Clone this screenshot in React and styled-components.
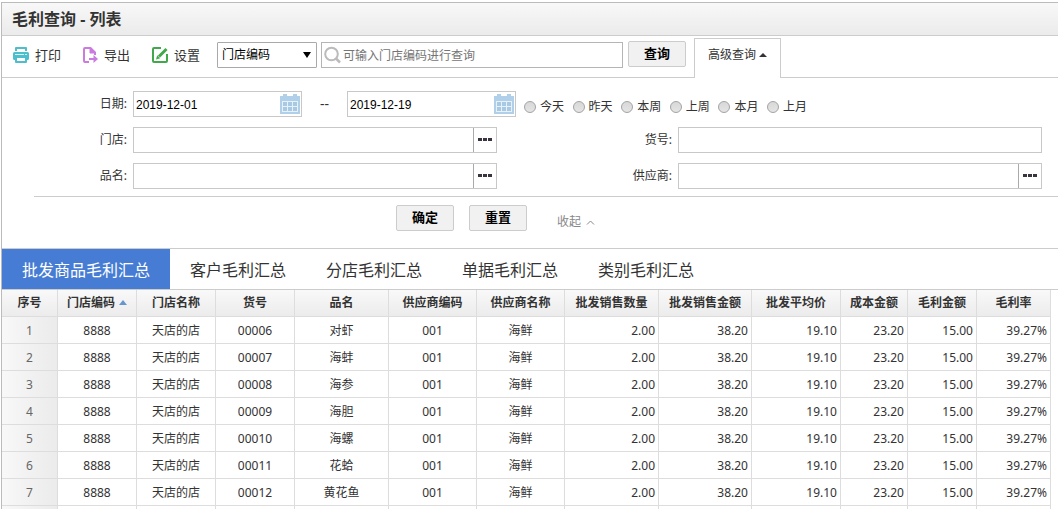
import React, { useState } from 'react';
import styled, { createGlobalStyle, css } from 'styled-components';

const GlobalStyle = createGlobalStyle`
    * {
        box-sizing: border-box;
    }
    body {
        margin: 0;
        background: #fff;
        color: #333;
        font: 12px/18px "Noto Sans", "Noto Sans CJK SC", sans-serif;
    }
    button, input, select {
        font: inherit;
        color: #000;
        margin: 0;
    }
`;

const Page = styled.main`
    margin: 2px 0 0 1px;
    border: solid #bbb;
    border-width: 1px 0 0 1px;
`;

const TitleBar = styled.header`
    height: 33px;
    border-bottom: 1px solid #ccc;
    background: linear-gradient(#f8f8f8, #ebebeb);
`;

const Title = styled.h1`
    margin: 0;
    padding-left: 10px;
    font-size: 16px;
    line-height: 32px;
`;

const Toolbar = styled.div`
    display: flex;
    align-items: flex-start;
    height: 42px;
    padding: 5px 0 0 11px;
    border-bottom: 1px solid #ccc;
`;

const ToolButton = styled.button`
    display: flex;
    align-items: center;
    gap: 6px;
    height: 28px;
    padding: 0;
    border: 0;
    background: none;
    color: #333;
    font-size: 13px;
    cursor: pointer;
    svg {
        flex: none;
    }
`;

const Tools = styled.div`
    display: flex;
    gap: 21px;
    margin-right: 17px;
`;

const SelectBox = styled.div`
    display: flex;
    position: relative;
    width: 100px;
    height: 26px;
    margin: 1px 4px 0 0;
    svg {
        position: absolute;
        right: 6px;
        top: 10px;
        pointer-events: none;
    }
`;

const Select = styled.select`
    appearance: none;
    width: 100%;
    padding: 0 20px 0 4px;
    border: 1px solid #a9a9a9;
    border-radius: 1px;
    background: #fff;
`;

const Box = styled.div`
    display: flex;
    align-items: center;
    width: ${props => props.$width || 'auto'};
    flex: ${props => (props.$width ? 'none' : '1')};
    height: 26px;
    border: 1px solid ${props => props.$border || '#c8c8c8'};
    background: #fff;
`;

const SearchBox = styled(Box)`
    margin: 1px 5px 0 0;
    padding-left: 2px;
    gap: 2px;
    svg {
        flex: none;
    }
`;

const TextInput = styled.input`
    flex: 1;
    min-width: 0;
    height: 100%;
    padding: 0;
    border: 0;
    outline: 0;
    background: none;
    &::placeholder {
        color: #757575;
    }
`;

const DateInput = styled(TextInput)`
    padding: 2px 0 0 2px;
    font-family: "Liberation Sans", Arial, sans-serif;
`;

const Button = styled.button`
    width: 58px;
    height: 26px;
    padding: 0 0 2px;
    border: 1px solid #ccc;
    border-radius: 2px;
    background: #f1f1f1;
    font-size: 13px;
    font-weight: 700;
    cursor: pointer;
`;

const AdvancedTab = styled.button`
    display: flex;
    justify-content: center;
    align-items: center;
    gap: 3px;
    width: 87px;
    height: 40px;
    margin: -3px 0 0 8px;
    padding: 0 0 8px;
    border: 1px solid #ccc;
    border-bottom: 0;
    background: #fff;
    color: #333;
    cursor: pointer;
`;

const Panel = styled.form`
    height: 171px;
    padding-top: 13px;
    border-bottom: 1px solid #ccc;
`;

const Fields = styled.div`
    display: grid;
    grid-template-columns: 1fr 1fr;
    gap: 10px 50px;
    padding-right: 16px;
`;

const Field = styled.div`
    display: flex;
    align-items: center;
    ${props => props.$wide && css`
        grid-column: 1 / -1;
    `}
`;

const FieldLabel = styled.label`
    width: 131px;
    padding-right: 6px;
    text-align: right;
`;

const Dash = styled.span`
    width: 45px;
    text-align: center;
    font-size: 14px;
`;

const IconButton = styled.button`
    display: flex;
    justify-content: center;
    align-items: center;
    height: 24px;
    width: ${props => (props.$divided ? '23px' : '22px')};
    padding: 0;
    border: 0;
    border-left: ${props => (props.$divided ? '1px solid #aaa' : '0')};
    background: none;
    cursor: pointer;
`;

const Periods = styled.div`
    display: flex;
    justify-content: space-between;
    align-self: flex-end;
    width: 283px;
    height: 20px;
    margin-left: 8px;
`;

const Period = styled.label`
    display: flex;
    align-items: center;
    gap: 4px;
`;

const Radio = styled.input`
    appearance: none;
    width: 12px;
    height: 12px;
    border: 1px solid #a3a3a3;
    border-radius: 50%;
    background: linear-gradient(#d8d8d8, #e4e4e4);
    &:checked {
        background: radial-gradient(#444 35%, #ddd 40%);
    }
`;

const Actions = styled.div`
    display: flex;
    gap: 15px;
    margin: 7px 0 0 32px;
    padding: 8px 0 0 362px;
    border-top: 1px solid #ccc;
`;

const Collapse = styled.button`
    display: flex;
    align-items: center;
    gap: 5px;
    height: 18px;
    margin: 8px 0 0 15px;
    padding: 0;
    border: 0;
    background: none;
    color: #888;
    cursor: pointer;
`;

const Tabs = styled.nav`
    display: flex;
    height: 41px;
    border-bottom: 1px solid #ccc;
`;

const Tab = styled.a`
    padding: 0 20px;
    font-size: 16px;
    line-height: 42px;
    height: 40px;
    text-decoration: none;
    color: ${props => (props.$active ? '#fff' : '#333')};
    background: ${props => (props.$active ? '#467cd4' : 'none')};
`;

const TableWrapper = styled.div`
    padding-right: 7px;
`;

const Table = styled.table`
    width: 100%;
    table-layout: fixed;
    border-spacing: 0;
`;

const Th = styled.th`
    height: 27px;
    padding: 0;
    border: solid #ddd;
    border-width: 0 1px 1px 0;
    background: linear-gradient(#f9f9f9, #ececec);
    white-space: nowrap;
    svg {
        margin: 0 0 2px 4px;
    }
`;

const Td = styled.td`
    height: 27px;
    padding: 2px 3px 0;
    border: solid #ddd;
    border-width: 0 1px 1px 0;
    text-align: ${props => (props.$number ? 'right' : 'center')};
    ${props => props.$index && css`
        color: #666;
        background: linear-gradient(90deg, #f8f8f8, #ebebeb);
    `}
`;

const Filler = styled(Td)`
    height: 3px;
    border-bottom: 0;
`;

const PrintIcon = () => (
    <svg width="16" height="16" viewBox="0 0 16 16">
        <path d="M3 0h10a1 1 0 0 1 1 1v3H2V1a1 1 0 0 1 1-1z" fill="#4dbfcc" />
        <path d="M4 2h8v2H4z" fill="#fff" />
        <path d="M1.500 5h13A1.500 1.500 0 0 1 16 6.500v5a1.500 1.500 0 0 1-1.500 1.500h-13A1.500 1.500 0 0 1 0 11.500v-5A1.500 1.500 0 0 1 1.500 5z" fill="#4dbfcc" />
        <path d="M2 7h9v1H2zM12 7h2v1h-2z" fill="#d5f1f4" />
        <path d="M2 10h12v5a1 1 0 0 1-1 1H3a1 1 0 0 1-1-1z" fill="#4dbfcc" />
        <path d="M4 11h8v3H4z" fill="#fff" />
    </svg>
);

const ExportIcon = () => (
    <svg width="16" height="16" viewBox="0 0 16 16" fill="none" stroke="#cb7be0" strokeWidth="2">
        <path d="M7 15H3a1 1 0 0 1-1-1V2a1 1 0 0 1 1-1h5.500L13 5.500V8" />
        <path d="M8 1v5h5z" fill="#cb7be0" strokeWidth="1" />
        <path d="M7 12h6" />
        <path d="M11.500 8v8l4.500-4z" fill="#cb7be0" stroke="none" />
    </svg>
);

const SettingsIcon = () => (
    <svg width="17" height="16" viewBox="0 0 17 16" fill="none" stroke="#41a94b" strokeWidth="2">
        <path d="M10 1H3a1 1 0 0 0-1 1v12a1 1 0 0 0 1 1h12a1 1 0 0 0 1-1V7" />
        <path d="M8 9.500L15.500 2" strokeWidth="3" />
        <path d="M5 12.500l1.200-4.200 3 3z" fill="#41a94b" stroke="none" />
    </svg>
);

const SearchIcon = () => (
    <svg width="17" height="18" viewBox="0 0 17 18" fill="none" stroke="#bbb" strokeWidth="2">
        <circle cx="7.500" cy="8" r="6.300" />
        <path d="M12 12.500l4 4" strokeWidth="2.500" />
    </svg>
);

const CalendarIcon = () => (
    <svg width="20" height="20" viewBox="0 0 20 20">
        <path d="M0 2h20v18H0z" fill="#b0d0e9" />
        <path d="M3 0h4v3H3zM13 0h4v3h-4z" fill="#b0d0e9" />
        <path d="M2 7h16v11H2z" fill="#e6f1f9" />
        <path d="M3 8h4v4H3zM8 8h4v4H8zM13 8h4v4h-4zM3 13h4v4H3zM8 13h4v4H8zM13 13h4v4h-4z" fill="#a8c9e3" />
    </svg>
);

const DotsIcon = () => (
    <svg width="14" height="4" viewBox="0 0 14 4" fill="#3a3340">
        <path d="M0 0h4v3H0zM5 0h4v3H5zM10 0h4v3h-4z" />
    </svg>
);

const Triangle = ({ color, width = 8, height = 4, down }) => (
    <svg width={width} height={height} viewBox="0 0 8 4" preserveAspectRatio="none">
        <path d={down ? 'M0 0h8L4 4z' : 'M0 4h8L4 0z'} fill={color} />
    </svg>
);

const columns = [
    { title: '序号', width: 56 },
    { title: '门店编码', width: 79, sorted: true },
    { title: '门店名称', width: 79 },
    { title: '货号', width: 79 },
    { title: '品名', width: 94 },
    { title: '供应商编码', width: 88 },
    { title: '供应商名称', width: 88 },
    { title: '批发销售数量', width: 94, number: true },
    { title: '批发销售金额', width: 93, number: true },
    { title: '批发平均价', width: 89, number: true },
    { title: '成本金额', width: 67, number: true },
    { title: '毛利金额', width: 69, number: true },
    { title: '毛利率', width: 74, number: true },
];

const Col = styled.col`
    width: ${props => props.$width}px;
`;

const products = ['对虾', '海蚌', '海参', '海胆', '海螺', '花蛤', '黄花鱼'];

const rows = products.map((name, i) => [
    i + 1, '8888', '天店的店', String(i + 6).padStart(5, '0'), name, '001', '海鲜',
    '2.00', '38.20', '19.10', '23.20', '15.00', '39.27%',
]);

const periods = ['今天', '昨天', '本周', '上周', '本月', '上月'];
const tabs = ['批发商品毛利汇总', '客户毛利汇总', '分店毛利汇总', '单据毛利汇总', '类别毛利汇总'];

const LookupField = ({ id, label, lookup }) => (
    <Field>
        <FieldLabel htmlFor={id}>{label}:</FieldLabel>
        <Box>
            <TextInput id={id} />
            {lookup && (
                <IconButton type="button" $divided aria-label={`选择${label}`}>
                    <DotsIcon />
                </IconButton>
            )}
        </Box>
    </Field>
);

const DateBox = ({ id, label, value }) => (
    <Box $width="169px">
        <DateInput id={id} aria-label={label} defaultValue={value} />
        <IconButton type="button" aria-label="选择日期">
            <CalendarIcon />
        </IconButton>
    </Box>
);

const App = () => {
    const [open, setOpen] = useState(true);
    const [active, setActive] = useState(0);

    return (
        <>
            <GlobalStyle />
            <Page>
                <TitleBar>
                    <Title>毛利查询 - 列表</Title>
                </TitleBar>
                <Toolbar>
                    <Tools>
                        <ToolButton><PrintIcon />打印</ToolButton>
                        <ToolButton><ExportIcon />导出</ToolButton>
                        <ToolButton><SettingsIcon />设置</ToolButton>
                    </Tools>
                    <SelectBox>
                        <Select aria-label="查询字段">
                            <option>门店编码</option>
                        </Select>
                        <Triangle color="#000" height={6} down />
                    </SelectBox>
                    <SearchBox $width="302px" $border="#b5b5b5">
                        <SearchIcon />
                        <TextInput aria-label="门店编码" placeholder="可输入门店编码进行查询" />
                    </SearchBox>
                    <Button>查询</Button>
                    <AdvancedTab onClick={() => setOpen(!open)}>
                        高级查询
                        <Triangle color="#333" />
                    </AdvancedTab>
                </Toolbar>
                {open && (
                    <Panel onSubmit={e => e.preventDefault()}>
                        <Fields>
                            <Field $wide>
                                <FieldLabel htmlFor="from">日期:</FieldLabel>
                                <DateBox id="from" value="2019-12-01" />
                                <Dash>--</Dash>
                                <DateBox id="to" label="结束日期" value="2019-12-19" />
                                <Periods>
                                    {periods.map(period => (
                                        <Period key={period}>
                                            <Radio type="radio" name="period" />
                                            {period}
                                        </Period>
                                    ))}
                                </Periods>
                            </Field>
                            <LookupField id="store" label="门店" lookup />
                            <LookupField id="code" label="货号" />
                            <LookupField id="name" label="品名" lookup />
                            <LookupField id="supplier" label="供应商" lookup />
                        </Fields>
                        <Actions>
                            <Button type="submit">确定</Button>
                            <Button type="reset">重置</Button>
                            <Collapse type="button" onClick={() => setOpen(false)}>
                                收起
                                <svg width="9" height="5" viewBox="0 0 9 5" fill="none" stroke="#888">
                                    <path d="M1 4.500l3.500-3.500L8 4.500" />
                                </svg>
                            </Collapse>
                        </Actions>
                    </Panel>
                )}
                <Tabs>
                    {tabs.map((tab, i) => (
                        <Tab key={tab} href="#" $active={i === active} onClick={() => setActive(i)}>
                            {tab}
                        </Tab>
                    ))}
                </Tabs>
                <TableWrapper>
                    <Table>
                        <colgroup>
                            {columns.map(col => <Col key={col.title} $width={col.width} />)}
                        </colgroup>
                        <thead>
                            <tr>
                                {columns.map(col => (
                                    <Th key={col.title}>
                                        {col.title}
                                        {col.sorted && <Triangle color="#6596d0" height={5} />}
                                    </Th>
                                ))}
                            </tr>
                        </thead>
                        <tbody>
                            {rows.map(row => (
                                <tr key={row[0]}>
                                    {row.map((cell, i) => (
                                        <Td key={columns[i].title} $index={i === 0} $number={columns[i].number}>
                                            {cell}
                                        </Td>
                                    ))}
                                </tr>
                            ))}
                            <tr>
                                {columns.map((col, i) => <Filler key={col.title} $index={i === 0} />)}
                            </tr>
                        </tbody>
                    </Table>
                </TableWrapper>
            </Page>
        </>
    );
};

export default App;
